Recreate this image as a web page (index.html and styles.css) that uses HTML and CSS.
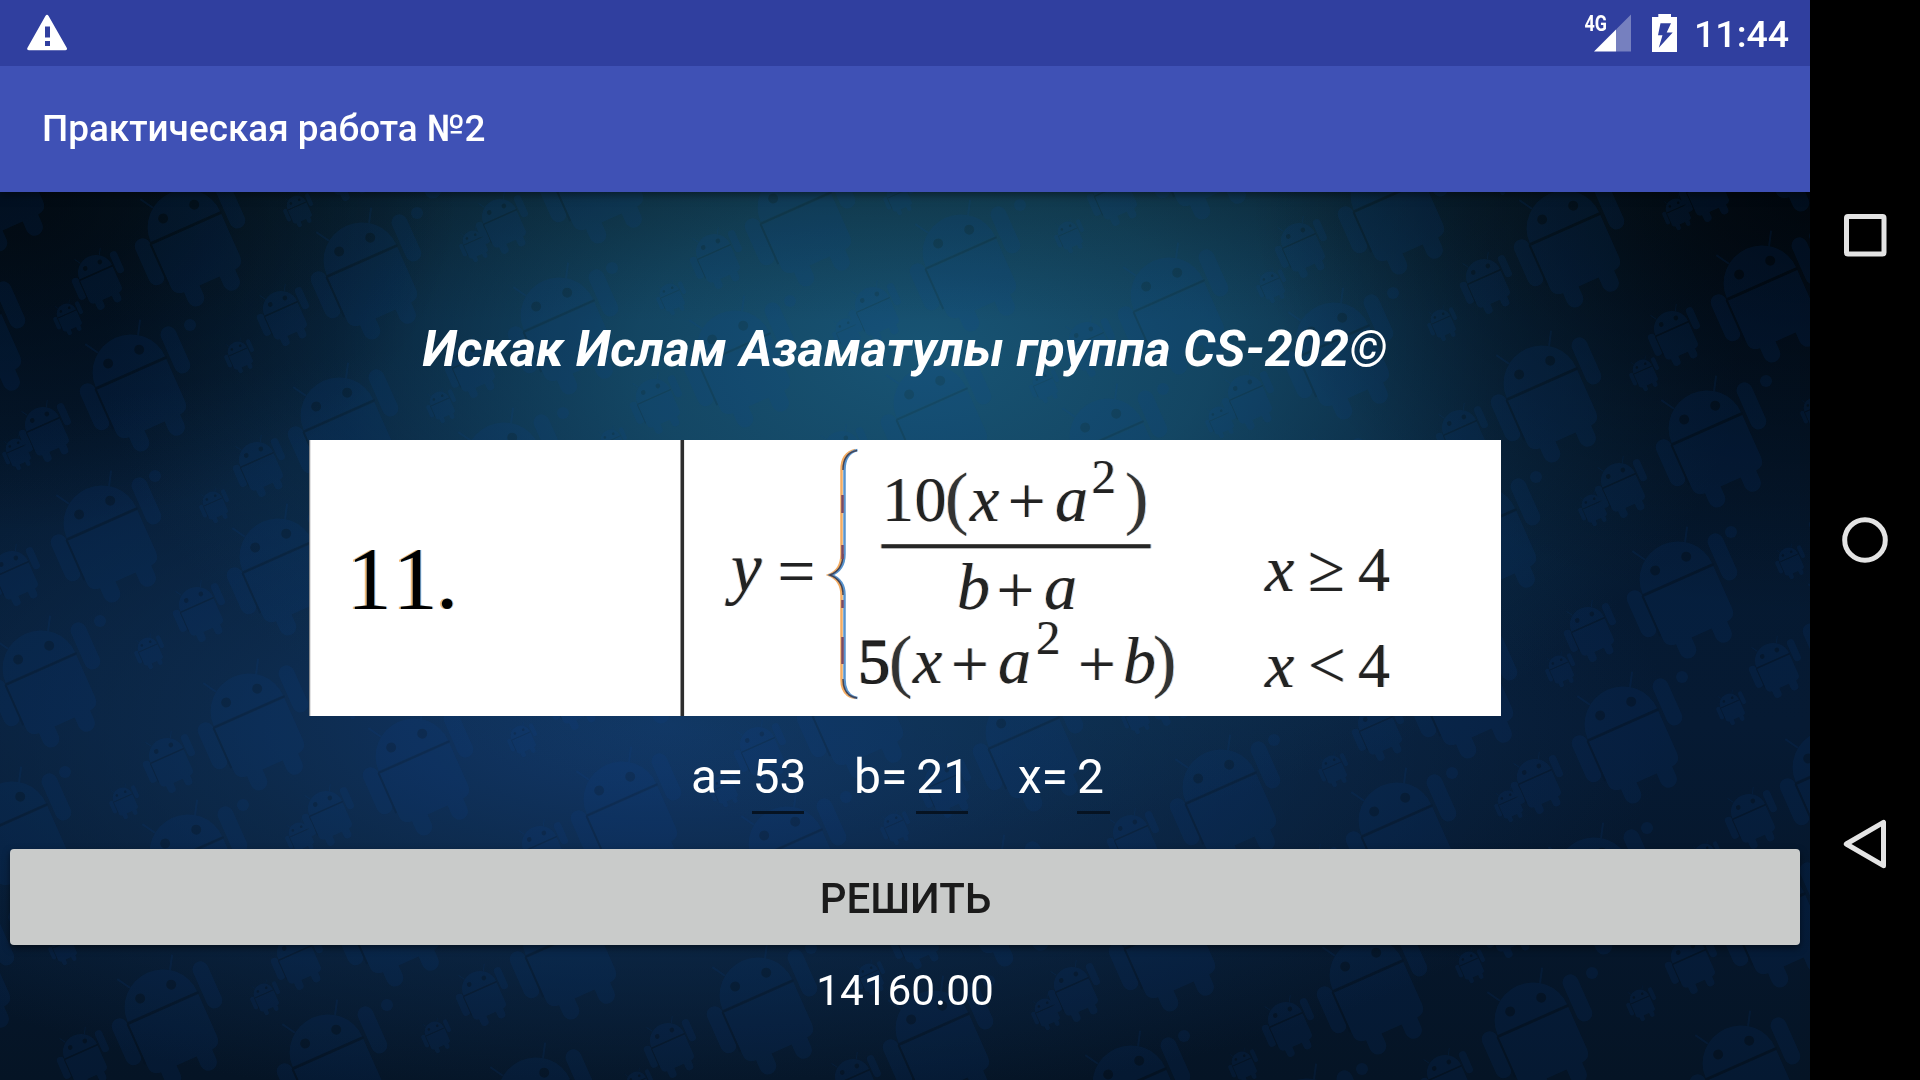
FILE: index.html
```html
<!DOCTYPE html>
<html lang="ru">
<head>
<meta charset="utf-8">
<title>Практическая работа №2</title>
<link rel="stylesheet" href="styles.css">
</head>
<body>
<div class="device">
  <div class="app">
    <header class="status">
      <svg class="warning" width="42" height="38" viewBox="26 14 42 38">
        <path fill="#fff" fill-rule="evenodd" d="M45.4 16Q47 13.600 48.600 16L66.700 47.800Q67.800 50.200 65.500 50.200H28.800Q26.300 50.200 27.500 47.800ZM45 26.500V37.500H50V26.500ZM45 41V46H50V41Z"/>
      </svg>
      <div class="status-right">
        <svg class="signal" width="50" height="48" viewBox="1582 5 50 48">
          <path fill="#fff" fill-opacity=".34" d="M1616 29.500L1631 14.500V51.500H1616Z"/>
          <path fill="#fff" d="M1594 51.500L1616 29.500V51.500Z"/>
          <text class="network" x="1584.500" y="31.300" textLength="22.500" lengthAdjust="spacingAndGlyphs">4G</text>
        </svg>
        <svg class="battery" width="25" height="38" viewBox="1652 14 25 38">
          <path fill="#fff" fill-rule="evenodd" d="M1658.300 14H1671V17H1677V52H1652V17H1658.300ZM1660.500 23.200L1658 35.300H1662.500L1658.800 47.700L1672.700 32.400H1666.700L1671 23.200Z"/>
        </svg>
        <span class="clock">11:44</span>
      </div>
    </header>
    <div class="appbar">Практическая работа №2</div>
    <main class="content">
      <svg class="wallpaper" width="1810" height="888" viewBox="0 192 1810 888">
        <defs>
          <g id="droid">
            <path d="M-38 -1.500A38 37 0 0 1 38 -1.500Z"/>
            <path class="antenna" d="M-22 -32L-30 -45M22 -32L30 -45"/>
            <path d="M-38 1.500H38V48Q38 57 28 58V68A8 8 0 0 1 11 68V58H-11V68A8 8 0 0 1 -28 68V58Q-38 57 -38 48Z"/>
            <rect x="-55" y="-9" width="16" height="50" rx="8"/>
            <rect x="42" y="-28" width="16" height="50" rx="8"/>
            <path class="dark" d="M-39 0H39M-39 0V44"/>
            <circle class="eye" cx="-17" cy="-18" r="5"/>
            <circle class="eye" cx="17" cy="-18" r="5"/>
          </g>
          <g id="big"><use href="#droid" transform="rotate(-24)"/></g>
          <g id="small"><use href="#droid" transform="rotate(-24) scale(.47)"/></g>
          <g id="tiny"><use href="#droid" transform="rotate(-24) scale(.27)"/></g>
          <g id="cell">
            <use href="#big" x="131" y="373"/>
            <use href="#big" x="339" y="416"/>
            <use href="#big" x="102" y="524"/>
            <use href="#big" x="278" y="557"/>
            <use href="#small" x="257" y="460"/>
            <use href="#small" x="416" y="513"/>
            <use href="#small" x="197" y="605"/>
            <use href="#small" x="385" y="657"/>
            <use href="#tiny" x="238" y="352"/>
            <use href="#tiny" x="440" y="402"/>
            <use href="#tiny" x="213" y="502"/>
            <use href="#tiny" x="389" y="537"/>
            <circle cx="155" cy="476" r="6"/>
            <circle cx="190" cy="325" r="6"/>
            <circle cx="333" cy="509" r="6"/>
          </g>
          <g id="row">
            <use href="#cell" x="-373" y="-88"/>
            <use href="#cell"/>
            <use href="#cell" x="373" y="88"/>
            <use href="#cell" x="746" y="176"/>
            <use href="#cell" x="1119" y="264"/>
            <use href="#cell" x="1492" y="352"/>
          </g>
        </defs>
        <g class="droids">
          <use href="#row" x="252" y="-888"/>
          <use href="#row" x="168" y="-592"/>
          <use href="#row" x="84" y="-296"/>
          <use href="#row"/>
          <use href="#row" x="-90" y="296"/>
          <use href="#row" x="-176" y="592"/>
        </g>
      </svg>
      <h1 class="author">Искак Ислам Азаматулы группа CS-202©</h1>
      <svg class="formula" width="1192" height="276" viewBox="309 440 1192 276">
        <rect x="309" y="440" width="1192" height="276" fill="#fff"/>
        <path d="M309.500 440V716" stroke="#8b8d90" stroke-width="1.500"/>
        <path d="M682.300 440V716" stroke="#2d2d2d" stroke-width="3.600"/>
        <g class="number">
          <text x="347" y="608">1</text><text x="393" y="608">1</text><text x="436" y="608">.</text>
        </g>
        <g class="brace">
          <path stroke="#f3ac62" d="M855.500 450Q841.500 453 841.500 470V554Q841.500 570 829 575Q841.500 580 841.500 595V679Q841.500 696 855.500 698"/>
          <path stroke="#5794cf" d="M857.500 450Q844.500 453 844.500 470V554Q844.500 570 831 575Q844.500 580 844.500 595V679Q844.500 696 857.500 698"/>
          <path stroke="#454454" stroke-width="1.500" d="M857 450.500Q843 453 843 470M843 554Q843 570 830 575Q843 580 843 595M843 679Q843 696 857 698"/>
          <path stroke="#7d4a62" d="M842.500 495V513M842.500 545V559M842.500 600V608M842.500 637V664"/>
        </g>
        <g class="math">
          <text class="var wide" x="731" y="591">y</text><text class="op" x="777.600" y="594">=</text>
          <text x="882" y="521">1</text><text x="914.500" y="521">0</text><text class="paren" x="945" y="521">(</text>
          <text class="var" x="970" y="521">x</text><text class="op" x="1007.700" y="524">+</text><text class="var" x="1055" y="521">a</text>
          <text class="sup" x="1091.600" y="492.500">2</text><text class="paren" x="1125" y="521">)</text>
          <path d="M881.500 546.300H1150.500" stroke="#262626" stroke-width="4"/>
          <text class="var" x="957" y="609">b</text><text class="op" x="996.600" y="612.500">+</text><text class="var" x="1044" y="609">a</text>
          <text class="five" x="858" y="683">5</text><text class="paren" x="889" y="683.500">(</text>
          <text class="var" x="913" y="683">x</text><text class="op" x="951" y="686.500">+</text><text class="var" x="998" y="683">a</text>
          <text class="sup" x="1036" y="654">2</text><text class="op" x="1078" y="686.500">+</text><text class="var" x="1123" y="683">b</text><text class="paren" x="1153" y="683.500">)</text>
          <text class="var" x="1265" y="591">x</text><text class="op" x="1308" y="591">≥</text><text x="1358" y="591">4</text>
          <text class="var" x="1265" y="687">x</text><text class="op" x="1308" y="688">&lt;</text><text x="1358" y="687">4</text>
        </g>
      </svg>
      <div class="inputs">
        <label class="field">a=<span class="value two">53</span></label>
        <label class="field">b=<span class="value two">21</span></label>
        <label class="field">x=<span class="value one">2</span></label>
      </div>
      <button class="solve" type="button">РЕШИТЬ</button>
      <div class="result">14160.00</div>
    </main>
  </div>
  <nav class="nav">
    <svg width="50" height="50" viewBox="-25 -25 50 50"><rect x="-18.500" y="-18.500" width="37.500" height="37.500" rx="1.500"/></svg>
    <svg width="50" height="50" viewBox="-25 -25 50 50"><circle r="20.300"/></svg>
    <svg width="50" height="50" viewBox="-25 -25 50 50"><path d="M-18.700 0L18.500 -21.700V21.700Z"/></svg>
  </nav>
</div>
</body>
</html>
```

FILE: styles.css
```css
* { box-sizing: border-box; }
body { margin: 0; background: #000; font-family: Roboto, sans-serif; color: #fff; }
svg { display: block; flex: none; }

.device { display: flex; width: 1920px; height: 1080px; overflow: hidden; }
.app { display: flex; flex-direction: column; width: 1810px; }

.status { position: relative; z-index: 2; display: flex; justify-content: space-between; height: 66px; padding: 14px 21px 0 26px; background: #303f9f; }
.status-right { display: flex; height: 40px; margin-top: -1px; }
.signal { margin-top: -8px; }
.network { font: 700 22px Roboto, sans-serif; fill: #fff; }
.battery { margin: 1px 0 0 20px; }
.clock { width: 95px; margin-left: 17.500px; font-size: 37.500px; font-weight: 500; line-height: 42px; white-space: nowrap; }

.appbar { position: relative; z-index: 1; height: 126px; padding-left: 42px; background: #3f51b5; font-size: 36.900px; font-weight: 500; line-height: 125px; box-shadow: 0 2px 9px rgba(0, 0, 0, .5); }

.content {
  position: relative;
  display: flex;
  flex-direction: column;
  align-items: center;
  height: 888px;
  overflow: hidden;
  background:
    radial-gradient(ellipse 460px 340px at 0 0, rgba(0, 4, 10, .75), transparent),
    radial-gradient(ellipse 560px 420px at 100% 0, rgba(0, 3, 8, .85), transparent),
    linear-gradient(rgba(12, 30, 30, .3), transparent 130px),
    radial-gradient(ellipse 820px 480px at 51% 18%, #185474 0%, rgba(22, 78, 108, .84) 35%, rgba(15, 56, 86, .42) 72%, transparent 100%),
    radial-gradient(ellipse 1000px 390px at 37% 60%, #12386a 0%, rgba(16, 50, 88, .65) 45%, transparent 100%),
    linear-gradient(#04182b 0%, #061a33 60%, #051425 100%);
}
.wallpaper { position: absolute; left: 0; top: 0; }
.droids { fill: #104c9c; opacity: .115; filter: blur(.6px); }
.antenna { stroke: #104c9c; stroke-width: 2px; }
.dark { fill: none; stroke: #020c18; stroke-width: 2px; }
.eye { fill: #020c18; }

.author { position: relative; margin: 127px 0 0; font-size: 50.500px; font-style: italic; font-weight: 700; line-height: 60px; white-space: nowrap; }

.formula { position: relative; margin-top: 61px; font-family: "Liberation Serif", serif; }
.number { font-size: 89px; filter: drop-shadow(-1.500px 0 .500px rgba(240, 150, 40, .6)) drop-shadow(1.500px 0 .500px rgba(50, 140, 220, .6)); }
.math { font-size: 64px; fill: #222; filter: drop-shadow(-1px 0 .500px rgba(240, 150, 60, .4)) drop-shadow(1px 0 .500px rgba(60, 140, 220, .4)); }
.var { font-size: 66px; font-style: italic; }
.wide { font-size: 69px; }
.op { font-size: 67px; }
.paren { font-size: 70px; fill: #333; }
.sup { font-size: 49px; }
.five { stroke: #161616; stroke-width: 1px; }
.brace { fill: none; stroke-width: 2.500px; }

.inputs { position: relative; display: flex; width: 1810px; height: 133px; padding: 33px 0 0 691px; font-size: 48px; line-height: 56px; }
.field { display: flex; margin-right: 49.500px; white-space: nowrap; }
.value { height: 65px; margin-left: 9px; border-bottom: 3px solid #061322; }
.two { width: 52px; }
.one { width: 33px; }

.solve { position: relative; width: 1790px; height: 96px; border: 0; border-radius: 4px; padding: 2px 0 0 1px; background: #c9cbca; color: #1b1b1b; font-family: Roboto, sans-serif; font-size: 42px; font-weight: 500; box-shadow: 0 3px 7px rgba(0, 0, 0, .5); }
.result { position: relative; margin-top: 21px; font-size: 42.300px; line-height: 50px; }

.nav { display: flex; flex-direction: column; align-items: center; justify-content: center; gap: 254.500px; width: 110px; padding-bottom: 1px; background: #000; }
.nav svg { fill: none; stroke: #e4e4e4; stroke-width: 5px; stroke-linejoin: round; }
```
